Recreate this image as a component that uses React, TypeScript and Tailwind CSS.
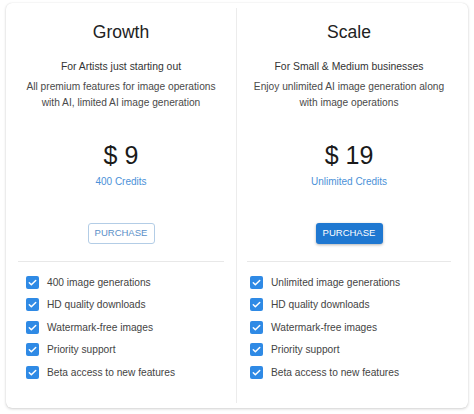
import React from "react";

const Check = () => (
  <span className="flex h-[13px] w-[13px] shrink-0 items-center justify-center rounded-[2px] bg-[#2f8ae5]">
    <svg width="11" height="11" viewBox="0 0 24 24" fill="none" stroke="white" strokeWidth="3.2" strokeLinecap="round" strokeLinejoin="round">
      <path d="M5 12.5l4.5 4.5L19 7.5" />
    </svg>
  </span>
);

type Plan = {
  title: string;
  subtitle: string;
  desc: string[];
  price: string;
  credits: string;
  filled: boolean;
  features: string[];
};

const plans: Plan[] = [
  {
    title: "Growth",
    subtitle: "For Artists just starting out",
    desc: ["All premium features for image operations", "with AI, limited AI image generation"],
    price: "$ 9",
    credits: "400 Credits",
    filled: false,
    features: ["400 image generations", "HD quality downloads", "Watermark-free images", "Priority support", "Beta access to new features"],
  },
  {
    title: "Scale",
    subtitle: "For Small & Medium businesses",
    desc: ["Enjoy unlimited AI image generation along", "with image operations"],
    price: "$ 19",
    credits: "Unlimited Credits",
    filled: true,
    features: ["Unlimited image generations", "HD quality downloads", "Watermark-free images", "Priority support", "Beta access to new features"],
  },
];

function Column({ plan, colClass, listClass }: { plan: Plan; colClass: string; listClass: string }) {
  return (
    <div className={"flex flex-col " + colClass}>
      <div className="mt-[17px] text-center text-[17.5px] leading-[24px] text-[#222]">{plan.title}</div>
      <div className="mt-[15px] whitespace-nowrap text-center text-[10.4px] leading-[16px] text-[#333]">{plan.subtitle}</div>
      <div className="mt-[4px] whitespace-nowrap text-center text-[10.2px] leading-[16px] text-[#4a4a4a]">
        {plan.desc.map((d) => (
          <div key={d}>{d}</div>
        ))}
      </div>
      <div className="mt-[29px] text-center text-[25px] leading-[30px] text-[#1a1a1a]">{plan.price}</div>
      <div className="mt-[5px] text-center text-[10px] leading-[14px] text-[#4b91d8]">{plan.credits}</div>
      <div className="mt-[34px] flex justify-center">
        {plan.filled ? (
          <button className="h-[21px] w-[67px] rounded-[3px] bg-[#1f78d1] text-[9.5px] font-medium text-white shadow-[0_1px_3px_rgba(0,0,0,0.3)]">
            PURCHASE
          </button>
        ) : (
          <button className="h-[21px] w-[67px] rounded-[3px] border border-[#b3cde6] text-[9.5px] font-medium text-[#5a8fc8]">
            PURCHASE
          </button>
        )}
      </div>
      <div className="mt-[17px] h-px bg-[#e8e8e8]" />
      <div className={"mt-[9px] flex flex-col " + listClass}>
        {plan.features.map((f) => (
          <div key={f} className="flex h-[22.5px] items-center">
            <Check />
            <span className="text-[10.2px] text-[#444]">{f}</span>
          </div>
        ))}
      </div>
    </div>
  );
}

export default function App() {
  return (
    <div className="h-[414px] w-[474px] bg-white pl-[6px] pt-[3px]" style={{ fontFamily: '"Liberation Sans", Arial, sans-serif' }}>
      <div className="flex h-[405px] w-[462px] rounded-[6px] bg-white shadow-[0_1px_3px_rgba(0,0,0,0.18),0_0_1px_rgba(0,0,0,0.12)]">
        <Column plan={plans[0]} colClass="w-[230px] px-[12px]" listClass="pl-[8px] [&>div>span:last-child]:ml-[8px]" />
        <div className="my-[5px] w-px self-stretch bg-[#ececec]" />
        <Column plan={plans[1]} colClass="w-[231px] pl-[10px] pr-[17px]" listClass="pl-[3px] [&>div>span:last-child]:ml-[8px]" />
      </div>
    </div>
  );
}
